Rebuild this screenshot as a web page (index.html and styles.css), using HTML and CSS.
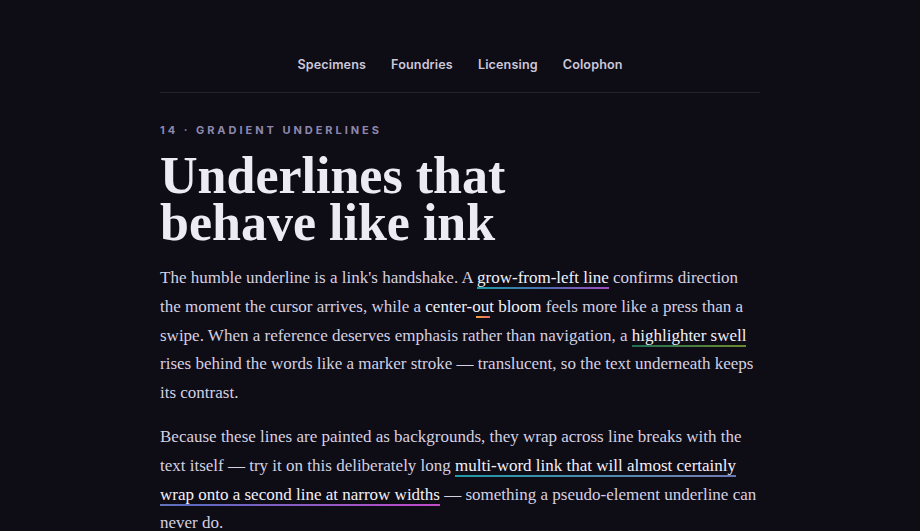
FILE: index.html
```html
<!DOCTYPE html>
<html lang="en">
<head>
<meta charset="utf-8">
<title>Gradient Underlines</title>
<link rel="stylesheet" href="styles.css">
</head>
<body>
<div class="page">
  <nav class="nav">
    <a href="#">Specimens</a>
    <a href="#">Foundries</a>
    <a href="#">Licensing</a>
    <a href="#">Colophon</a>
  </nav>
  <article class="article">
    <p class="eyebrow">14 · Gradient Underlines</p>
    <h1 class="title">Underlines that<br>behave like ink</h1>
    <p class="body">The humble underline is a link's handshake. A <a class="lnk grow" href="#">grow-from-left line</a> confirms direction the moment the cursor arrives, while a <a class="lnk center" href="#">center-out bloom</a> feels more like a press than a swipe. When a reference deserves emphasis rather than navigation, a <a class="lnk swell" href="#">highlighter swell</a> rises behind the words like a marker stroke — translucent, so the text underneath keeps its contrast.</p>
    <p class="body">Because these lines are painted as backgrounds, they wrap across line breaks with the text itself — try it on this deliberately long <a class="lnk multi" href="#">multi-word link that will almost certainly wrap onto a second line at narrow widths</a> — something a pseudo-element underline can never do.</p>
  </article>
</div>
</body>
</html>
```
FILE: styles.css
```css
html, body {
  margin: 0;
  padding: 0;
  background: #0e0c15;
}
body {
  color: #d5d1e2;
  font-family: "Liberation Serif", serif;
}
.page {
  width: 600px;
  margin: 0 auto;
}
.nav {
  display: flex;
  justify-content: center;
  gap: 25px;
  padding: 55px 0 17px;
  border-bottom: 1px solid #25222f;
}
.nav a {
  font-family: Inter, "Liberation Sans", sans-serif;
  font-size: 12.6px;
  line-height: 20px;
  font-weight: 600;
  letter-spacing: 0.01em;
  color: #cbc8da;
  text-decoration: none;
}
.article {
  padding-top: 29px;
}
.eyebrow {
  margin: 0;
  font-family: Inter, "Liberation Sans", sans-serif;
  font-size: 11px;
  line-height: 16px;
  font-weight: 700;
  letter-spacing: 0.27em;
  text-transform: uppercase;
  color: #8e88ad;
}
.title {
  margin: 14px 0 18px;
  font-family: "Liberation Serif", serif;
  font-size: 52px;
  line-height: 47px;
  font-weight: 700;
  color: #ecebf3;
  letter-spacing: 0;
}
.body {
  margin: 0 0 15px;
  font-size: 17px;
  line-height: 28.8px;
}
.lnk {
  color: #f3f1fa;
  text-decoration: none;
  background-repeat: no-repeat;
  -webkit-box-decoration-break: slice;
  box-decoration-break: slice;
  padding-bottom: 2px;
}
.grow {
  background-image: linear-gradient(90deg, #1f9aa6, #4a6fb0 50%, #a24cc0);
  background-size: 100% 2px;
  background-position: 0 100%;
}
.center {
  background-image: linear-gradient(90deg, #f0a23c, #e8656e);
  background-size: 14px 2px;
  background-position: 50% 100%;
}
.swell {
  background-image: linear-gradient(90deg, #1f6f55, #6d8a2e);
  background-size: 100% 2px;
  background-position: 0 100%;
}
.multi {
  background-image: linear-gradient(90deg, #1f9aa6, #6d80b0 45%, #5b6ac0 55%, #c24ac8);
  background-size: 100% 2px;
  background-position: 0 100%;
}
```
